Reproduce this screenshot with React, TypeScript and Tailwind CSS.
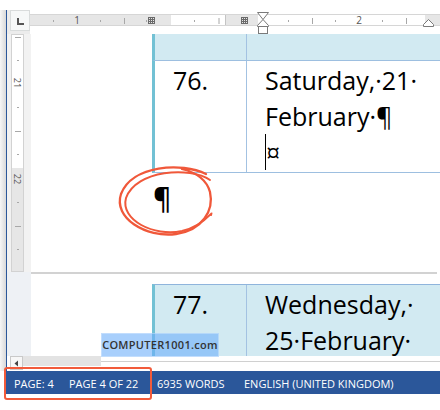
import React from "react";

function HRulerMarks() {
  const small = [23, 70, 116, 164, 258, 305, 352];
  const long = [94, 188.5, 282, 376];
  const grid = (x0: number) => {
    const els: React.ReactNode[] = [];
    for (let i = 0; i < 4; i++) {
      els.push(<line key={"v" + i} x1={x0 + i * 2 + 0.5} y1={7} x2={x0 + i * 2 + 0.5} y2={14} stroke="#6a6a6a" strokeWidth={1} />);
      els.push(<line key={"h" + i} x1={x0} y1={7.5 + i * 2} x2={x0 + 7} y2={7.5 + i * 2} stroke="#6a6a6a" strokeWidth={1} />);
    }
    return els;
  };
  return (
    <svg className="absolute left-0 top-0 overflow-visible" width={410} height={24}>
      {small.map((x) => (
        <line key={"s" + x} x1={x + 0.5} y1={10} x2={x + 0.5} y2={12} stroke="#a8a8a8" strokeWidth={1} />
      ))}
      {long.map((x) => (
        <line key={"l" + x} x1={x + 0.5} y1={8} x2={x + 0.5} y2={14} stroke="#a8a8a8" strokeWidth={1} />
      ))}
      <line x1={195.5} y1={5} x2={195.5} y2={15} stroke="#c4c4c4" strokeWidth={1} />
      <text x={47} y={14} fontSize={10} fill="#555" textAnchor="middle" fontFamily="'Open Sans', sans-serif">1</text>
      <text x={329} y={14} fontSize={10} fill="#555" textAnchor="middle" fontFamily="'Open Sans', sans-serif">2</text>
      <g>{grid(118)}</g>
      <g>{grid(211)}</g>
      <polygon points="227.5,2.5 238.5,2.5 233,9.5" fill="#fff" stroke="#7a7a7a" strokeWidth={1} />
      <polygon points="233,9.5 238.5,15.5 238.5,16.5 227.5,16.5 227.5,15.5" fill="#fff" stroke="#7a7a7a" strokeWidth={1} />
      <rect x={228.5} y={16.5} width={9} height={7} fill="#fff" stroke="#7a7a7a" strokeWidth={1} />
      <polygon points="398.5,9.5 403.5,14.5 403.5,16.5 393.5,16.5 393.5,14.5" fill="#fff" stroke="#7a7a7a" strokeWidth={1} />
    </svg>
  );
}

function VRulerMarks() {
  const small = [26, 73, 120, 168, 215];
  const long = [3, 97, 192];
  return (
    <svg className="absolute left-[-1px] top-[-1px]" width={13} height={238}>
      {small.map((y) => (
        <line key={"s" + y} x1={6} y1={y + 0.5} x2={8} y2={y + 0.5} stroke="#a8a8a8" strokeWidth={1} />
      ))}
      {long.map((y) => (
        <line key={"l" + y} x1={4} y1={y + 0.5} x2={10} y2={y + 0.5} stroke="#a8a8a8" strokeWidth={1} />
      ))}
      <text x={6.5} y={49} fontSize={9} fill="#555" textAnchor="middle" dominantBaseline="central" transform="rotate(90 6.5 49)" fontFamily="'Open Sans', sans-serif">21</text>
      <text x={6.5} y={145} fontSize={9} fill="#555" textAnchor="middle" dominantBaseline="central" transform="rotate(90 6.5 145)" fontFamily="'Open Sans', sans-serif">22</text>
    </svg>
  );
}

export default function App() {
  return (
    <div className="relative w-[440px] h-[410px] overflow-hidden bg-white font-['Open_Sans',sans-serif]">
      <div className="h-[10px]" />
      <div className="flex h-[361px]">
        <div className="w-[6px] bg-linear-to-r from-[#f6f6f6] to-[#d9d9d9]" />
        <div className="w-px bg-[#2b579a]" />
        <div className="flex-1 flex flex-col min-w-0">
          <div className="flex h-[24px]">
            <div className="w-[23px] bg-[#ececec]">
              <div className="ml-[3px] w-[20px] h-[21px] border border-[#d9dcdc] bg-[#f6f8f8] flex items-center justify-center">
                <div className="w-[7px] h-[7px] border-l-2 border-b-2 border-[#555] mt-[1px]" />
              </div>
            </div>
            <div className="relative flex-1 bg-white">
              <div className="mt-[4px] h-[12px] flex border-y border-[#d6d6d6]">
                <div className="w-[141px] bg-[#e6e6e6]" />
                <div className="w-[55px] bg-white" />
                <div className="w-[32px] bg-[#e6e6e6]" />
                <div className="w-[167px] bg-white" />
                <div className="flex-1 bg-[#e6e6e6]" />
              </div>
              <HRulerMarks />
            </div>
          </div>
          <div className="flex h-[322px]">
            <div className="w-[24px] bg-[#f2f2f2] flex flex-col">
              <div className="relative ml-[4px] w-[13px] h-[238px] border border-[#d2d2d2] flex flex-col">
                <div className="h-[133px] bg-white" />
                <div className="flex-1 bg-[#e6e6e6]" />
                <VRulerMarks />
              </div>
              <div className="flex-1 bg-[#eef1f5]" />
            </div>
            <div className="flex-1 min-w-0 overflow-hidden bg-white text-black">
              <div className="ml-[121px] w-[400px]">
                <div className="flex h-[27px] bg-[#d2eaf2] border-l-[3px] border-l-[#72c1d4] border-b border-b-[#9dbfe0]">
                  <div className="w-[92px] border-r border-r-[#a3c2e2]" />
                  <div className="flex-1" />
                </div>
                <div className="flex h-[112px] border-l-[3px] border-l-[#72c1d4] border-b border-b-[#9dbfe0] text-[25px] leading-[36px]">
                  <div className="w-[92px] border-r border-r-[#a3c2e2] pl-[18px] pt-[1px]">76.</div>
                  <div className="flex-1 pl-[18px] pt-[1px] whitespace-nowrap">
                    <div>Saturday,·21·</div>
                    <div>February·¶</div>
                    <div className="flex items-start">
                      <span className="inline-block w-px h-[36px] bg-black" />
                      <span>¤</span>
                    </div>
                  </div>
                </div>
              </div>
              <div className="h-[99px] ml-[122px] pt-[7px] text-[28px] leading-[36px] font-semibold">¶</div>
              <div className="w-[406px] h-[2px] bg-[#d2d2d2]" />
              <div className="h-[10px]" />
              <div className="ml-[121px] w-[400px] flex h-[120px] bg-[#d2eaf2] border-l-[3px] border-l-[#72c1d4] border-t border-t-[#8fb4dc] text-[25px] leading-[36px]">
                <div className="w-[92px] border-r border-r-[#a3c2e2] pl-[18px] pt-[1px]">77.</div>
                <div className="flex-1 pl-[18px] pt-[1px] whitespace-nowrap">
                  <div>Wednesday,·</div>
                  <div>25·February·</div>
                </div>
              </div>
            </div>
          </div>
          <div className="flex h-[15px] bg-white">
            <div className="ml-[3px] w-[13px] h-[14px] border border-[#c9c9c9] bg-[#f7f7f7] flex items-center justify-center">
              <svg width={5} height={7}>
                <polygon points="4,0.5 4,6.5 0.5,3.5" fill="#444" />
              </svg>
            </div>
            <div className="w-[78px] h-[10px] bg-[#e3e3e3]" />
            <div className="flex-1 mt-[5px] border-t border-[#d0d0d0]" />
          </div>
        </div>
      </div>
      <div className="ml-[6px] h-[23px] bg-[#2b579a] flex items-center pt-[1px] text-white text-[11px] leading-[15px] whitespace-nowrap">
        <span className="pl-[8px] w-[63px]">PAGE: 4</span>
        <span className="w-[88px]">PAGE 4 OF 22</span>
        <span className="w-[87px]">6935 WORDS</span>
        <span>ENGLISH (UNITED KINGDOM)</span>
      </div>

      <div className="absolute left-[101px] top-[333px] w-[118px] h-[24px] bg-[#6eaffa]/60 border border-white/30 flex items-center justify-center text-[11px] font-semibold tracking-[0.3px] text-[#333]">
        COMPUTER1001.com
      </div>

      <svg className="absolute left-[110px] top-[158px]" width={110} height={84} fill="none">
        <path d="M96 16 C72 4 22 7 11 36 C3 60 36 80 66 76 C93 72 104 52 100 34 C97 23 88 15 72 11" stroke="#f0583a" strokeWidth={2.3} strokeLinecap="round" />
        <path d="M100 22 C80 8 26 12 16 40 C10 62 44 79 72 73 C96 67 104 50 101 57" stroke="#f0583a" strokeWidth={2} strokeLinecap="round" />
      </svg>

      <div className="absolute left-[4px] top-[367px] w-[148px] h-[33px] border-2 border-[#f25b3b] rounded-[3px]" />
    </div>
  );
}
